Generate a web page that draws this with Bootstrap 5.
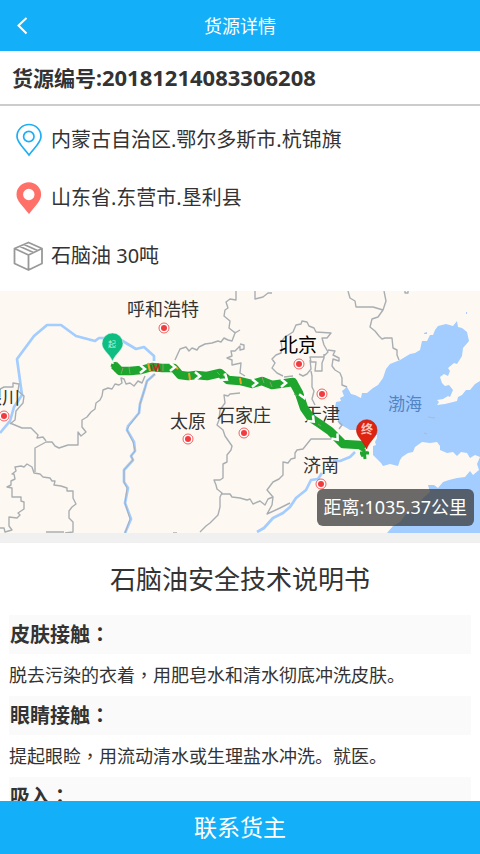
<!DOCTYPE html>
<html lang="zh-CN">
<head>
<meta charset="utf-8">
<meta name="viewport" content="width=device-width, initial-scale=1">
<title>货源详情</title>
<link href="https://cdn.jsdelivr.net/npm/bootstrap@5.3.0/dist/css/bootstrap.min.css" rel="stylesheet">
<style>
body{font-family:"Noto Sans","Noto Sans CJK SC",sans-serif;color:#333;background:#fff}
.brand-bg{background:#14aff9;color:#fff}
.top-bar{height:51px}
.top-bar h1{font-size:18px;line-height:24px}
.back-btn{width:44px;height:50px}
.page-scroll{scrollbar-width:none;min-height:0}
.page-scroll::-webkit-scrollbar{display:none}
.order-no{font-size:21px;line-height:52px;padding:0 12px;border-bottom:2px solid #ccc}
.order-no span{font-size:22px}
.info-list{padding:5px 12px 6px}
.info-list li{height:58px;font-size:20px;gap:7px}
.info-icon{width:32px;height:34px;flex:none}
.route-map text{font-size:18px;fill:#333}
.distance{right:6px;bottom:7px;font-size:18px;line-height:37px;padding:0 7px;border-radius:6px;background:rgba(60,60,60,.76);color:#fff}
.divider{height:10px;background:#f0f0f0}
.sheet{padding:0 9px}
.sheet h2{font-size:26px;line-height:72px}
.sheet h3{font-size:20px;line-height:39px;background:#fafafa;padding:0 1px}
.sheet p{font-size:18px;line-height:42px}
.mid-mark{font-family:"Noto Sans CJK TC",sans-serif;line-height:1}
.contact{height:53px;font-size:23px;line-height:53px}
</style>
<script src="https://cdn.jsdelivr.net/npm/bootstrap@5.3.0/dist/js/bootstrap.bundle.min.js"></script>
</head>
<body>
<div class="vh-100 d-flex flex-column">
<header class="top-bar brand-bg position-relative d-flex align-items-center justify-content-center flex-shrink-0">
  <button type="button" class="back-btn btn p-0 border-0 rounded-0 position-absolute start-0 top-0" aria-label="返回">
    <svg class="d-block" width="44" height="50" fill="none" stroke="#fff" stroke-width="2"><path d="M26.500 18L18.500 25.500L26.500 33.500"/></svg>
  </button>
  <h1 class="m-0 fw-normal">货源详情</h1>
</header>

<main class="page-scroll flex-grow-1 overflow-auto">
  <div class="order-no fw-bold">货源编号:<span>20181214083306208</span></div>
  <ul class="info-list list-unstyled m-0">
    <li class="d-flex align-items-center">
      <svg class="info-icon" viewBox="0 0 32 34" fill="none" stroke="#1eaef5" stroke-width="1.700"><path d="M17 32C11 24 5 19.500 5 13.500a12 12 0 0 1 24 0C29 19.500 23 24 17 32Z"/><circle cx="16.800" cy="13.500" r="5.200"/></svg>
      <span>内蒙古自治区.鄂尔多斯市.杭锦旗</span>
    </li>
    <li class="d-flex align-items-center">
      <svg class="info-icon" viewBox="0 0 32 34"><path fill="#ff7068" fill-rule="evenodd" d="M17 33C11 25 4.500 20 4.500 13.500a12.300 12.300 0 0 1 24.600 0C29.100 20 23 25 17 33ZM16.800 7.800a5.700 5.700 0 1 0 0 11.400a5.700 5.700 0 1 0 0-11.400Z"/></svg>
      <span>山东省.东营市.垦利县</span>
    </li>
    <li class="d-flex align-items-center">
      <svg class="info-icon" viewBox="0 0 32 34" fill="none" stroke="#999" stroke-width="1.800" stroke-linejoin="round"><path d="M16.500 3.500L30 9.500V24.500L16.500 31L2.500 24.500V9.500ZM2.500 9.500L16.500 16L30 9.500M16.500 16V31M12 5.500L25.500 11.500M8 7.500L21.500 13.500"/></svg>
      <span>石脑油 30吨</span>
    </li>
  </ul>

  <div class="position-relative overflow-hidden">
    <svg class="route-map d-block w-100" viewBox="0 291 480 242" role="img" aria-label="运输路线">
      <defs>
        <g id="city"><circle r="5" fill="#fff" stroke="#f0605f" stroke-width="1"/><circle r="3" fill="#f03c3f"/></g>
        <path id="arrow" d="M-4-4L1 0L-4 4" fill="none" stroke="#fff" stroke-width="2.500"/>
      </defs>
      <path fill="#fdf9f2" d="M0 291H480V533H0Z"/>
      <!-- sea -->
      <g fill="#a3ccff">
        <path d="M480 381L475 384L470 390L466 390L462 395L458 397L457 401L445 404L437 405L439 402L437 400L443 399L448 396L450 397L453 390L449 385L445 386L442 383L440 377L444 374L448 376L450 371L448 368L454 363L457 364L462 356L463 348L469 341L467 332L462 328L458 327L457 321L453 326L446 324L442 325L438 326L435 330L433 335L430 335L427 341L422 341L420 350L415 353L410 354L400 360L390 364L386 369L383 378L378 385L373 388L367 393L362 393L361 398L355 395L351 394L347 387L342 391L344 396L340 398L341 401L336 402L335 408L337 416L339 424L345 427L350 430L358 430L362 434L377 435V438L375 442L376 445L373 446L373 455L377 459L381 463L383 466L390 464L398 466L400 460L402 457L408 453L413 452L415 447L422 442L430 443L437 442L440 446L440 450L447 453L453 452L457 456L461 452L467 453L470 458L475 455L480 457Z"/>
        <path d="M480 457L477 464L479 470L473 475L470 471L465 477L457 478L449 480L443 482L438 488L434 485L428 485L430 492L423 498L420 503L413 510L407 513L400 522L393 526L387 533H480Z"/>
        <path d="M443 342l4-1v3h-3ZM424 333l3-1v2h-3ZM466 312h1v2h-1Z"/>
      </g>
      <path fill="#f8f8f3" stroke="#a8bccf" stroke-width="1" d="M428 417L435 418M424 433L427 434"/>
      <!-- rivers -->
      <g fill="none" stroke="#a3ccff" stroke-width="2.700" stroke-linejoin="round">
        <path d="M0 433L10 421L14 407L22 395L17 359L34 336L47 325H61L76 336L95 341L99 338H106M121 340L136 349L144 347L154 356V361M155 374L147 381L145 388L140 404L139 413L128 426L127 430L134 442L135 451L131 456L133 460L124 470V482L128 488L125 503L131 519L125 533"/>
        <path d="M355 452L350 457L340 461L333 461M322 473L318 479L311 480L306 490L296 498L290 507L283 513L273 518L264 528L257 532"/>
      </g>
      <!-- province borders -->
      <g fill="none" stroke="#a9aeb3" stroke-width="1.400" stroke-linejoin="round">
        <path stroke-width="1" d="M155 374L147 381L145 388L140 404L139 413L129 426L127 430L133 442L135 451L131 456L133 460L124 470V482L127 488L125 503L130 519L125 533"/>
        <path d="M175 360L180 349L186 347L189 351L192 348L197 350L199 347L205 344L212 343L218 341L221 342L224 338L228 340L232 341L235 333L240 330M236 291V300L230 299L226 302L228 308L225 310L224 316L230 321L229 328L234 332L236 333"/>
        <path d="M240 344L244 345V349L240 350L240 346L235 351L231 351L232 356L227 358L232 360L232 365L241 363L240 373L245 376"/>
        <path d="M145 376L142 383L138 381L134 386L130 383L126 384L124 379L121 378L122 383L119 385L115 384L112 389L108 388L103 390L102 396L100 400L96 403L95 409L91 412L87 417L82 420L82 427L86 432L81 436L78 432V445L68 445L59 448L55 446L52 442H46L35 448V472"/>
        <path d="M10 423L22 428L31 428L34 431L38 435L37 438L43 437L46 441M0 389L4 387L13 387V383L19 384L18 391L24 396L23 403L16 411L15 420L10 424"/>
        <path d="M0 528H4L5 532L12 530L9 526V517L17 518L20 515L18 513L24 509L24 502L21 501V497L12 497V488L7 487L11 485L11 481L15 479L14 474H12L16 471L15 467L21 466L24 467L27 464L32 467L34 473L40 474L43 477L50 478L52 481H55L54 485L61 486L67 488V491L73 491V498L76 504L72 507L69 511V518L73 522L73 532L65 533"/>
        <path d="M240 393L230 394L228 396L224 395L225 403L220 410L219 420L217 425L223 430L225 436L232 446L231 450L227 455L227 462L223 464V478L220 480L214 480L216 485L217 489L222 493L220 497V507L218 515L214 519L210 523L206 526L203 529L200 532M222 494L230 494L232 497L240 498L247 500L250 499L253 504L260 501L265 505L268 499L273 497"/>
        <path d="M340 439H311L303 449L297 450L295 453V458L291 459L288 463L283 462L283 475L279 479L273 482L267 490L273 497L272 505L267 514L280 508L290 503"/>
        <path d="M173 533H177M46 532h18"/>
        <path d="M283 376L277 373L272 368L275 363L272 359L276 355L281 353L282 348L281 342L285 337L293 332L296 325L301 324L302 321L307 322L309 326L314 328L316 332L331 333L327 338L322 338L324 345L328 352L323 357L310 357L311 362L316 362L315 371L322 371L322 363L324 358L324 354M328 350L335 351L333 355L339 358V361L333 359L332 366L335 370L340 373L342 378V385L347 387M310 360L311 369L307 374L303 376L299 374M293 376L284 377M311 371L312 376V387L314 391L312 399L315 405"/>
        <path d="M255 291V299L263 297L268 293H272M348 291L350 298L355 301L356 307L373 307L383 310L386 301L384 291M383 310L378 317L372 319L370 327L375 331L379 336L382 339L385 338H392L393 348L397 350L397 355L399 360M405 291v2h3v-2"/>
        <path d="M338 421L342 425L339 429"/>
      </g>
      <text x="-16" y="404">银川</text>
      <text x="127" y="316">呼和浩特</text>
      <text x="170" y="428">太原</text>
      <text x="217" y="422">石家庄</text>
      <text x="304" y="421">天津</text>
      <text x="303" y="472">济南</text>
      <text x="279" y="352" style="font-size:19px;fill:#000">北京</text>
      <text x="388" y="410" style="font-size:17px;fill:#5085c5">渤海</text>
      <use href="#city" x="4" y="416"/><use href="#city" x="164" y="328"/><use href="#city" x="299" y="364"/><use href="#city" x="322" y="394"/><use href="#city" x="188" y="439"/><use href="#city" x="244" y="433"/><use href="#city" x="321" y="484"/>
      <!-- route with traffic -->
      <g fill="none" stroke-linejoin="round">
        <path stroke="#1ea52d" stroke-width="8.500" d="M114 365L120 371L130 371L141 370L152 367L162 368L174 368L180 375L188 376L196 375L207 376L220 373L228 380L240 381L252 384L262 381L272 385L293 382L299 393L304 408L311 418L320 424L330 431L338 439L343 444L360 445L365 448"/>
        <path stroke="#1ea52d" stroke-width="3" d="M111 365L117 367M115 362L116 371M360 453H369M364 449L365 459M361 456L368 452"/>
        <path stroke="#f4a22b" stroke-width="2" d="M148 363l2 8M158 364l-1 7M173 365l5 4M189 373l1 7M223 375l3-1M240 378l1 6"/>
        <path stroke="#b42b22" stroke-width="1.500" d="M153 364l3 7l2-7l2 7M151 365l1 6"/>
        <path stroke="#8b9e70" stroke-width="1" d="M123 368l-2 6M129 367l1 7M163 364v7M217 372l3 3M262 377l2 6M270 382l2 5M294 394l3 2M318 424l3 2"/>
      </g>
      <use href="#arrow" x="144" y="369"/><use href="#arrow" x="174" y="367"/><use href="#arrow" x="199" y="376"/><use href="#arrow" transform="translate(226 379) rotate(35)"/><use href="#arrow" x="256" y="383"/><use href="#arrow" x="285" y="383"/><use href="#arrow" transform="translate(304 397) rotate(75)"/><use href="#arrow" transform="translate(313 421) rotate(45)"/><use href="#arrow" transform="translate(337 439) rotate(50)"/>
      <path fill="#0dbd82" stroke="#d6f3e5" stroke-width=".5" d="M112.500 361C109 353 102 350 102 343.500a10.500 10.500 0 0 1 21 0C123 350 116 353 112.500 361Z"/>
      <text x="108" y="347" style="font-size:8px;fill:#bdf3df">起</text>
      <path fill="#dc2410" stroke="#b91808" stroke-width=".6" d="M366.500 449C363 440 356.500 437 356.500 430a10 10 0 0 1 20.500 0C377 437 370 440 366.500 449Z"/>
      <text x="361" y="434" style="font-size:12px;fill:#ffc2ba;font-weight:bold">终</text>
    </svg>
    <div class="distance position-absolute">距离:1035.37公里</div>
  </div>
  <div class="divider"></div>

  <section class="sheet">
    <h2 class="m-0 text-center fw-normal">石脑油安全技术说明书</h2>
    <h3 class="m-0 fw-bold">皮肤接触<span class="mid-mark" lang="zh-TW">：</span></h3>
    <p class="m-0">脱去污染的衣着<span class="mid-mark" lang="zh-TW">，</span>用肥皂水和清水彻底冲洗皮肤。</p>
    <h3 class="m-0 fw-bold">眼睛接触<span class="mid-mark" lang="zh-TW">：</span></h3>
    <p class="m-0">提起眼睑<span class="mid-mark" lang="zh-TW">，</span>用流动清水或生理盐水冲洗。就医。</p>
    <h3 class="m-0 fw-bold">吸入<span class="mid-mark" lang="zh-TW">：</span></h3>
  </section>
</main>

<button type="button" class="contact brand-bg btn w-100 rounded-0 border-0 p-0 flex-shrink-0">联系货主</button>
</div>
</body>
</html>
